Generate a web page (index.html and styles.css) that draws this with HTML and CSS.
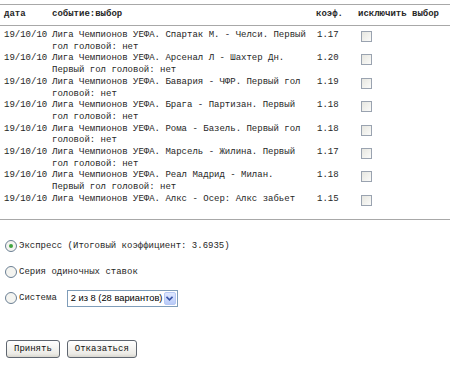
FILE: index.html
```html
<!DOCTYPE html>
<html lang="ru">
<head>
    <meta charset="UTF-8">
    <title>Экспресс</title>
    <link rel="stylesheet" href="styles.css">
</head>
<body>

    <table class="bets">
        <thead>
            <tr>
                <th class="col-date">дата</th>
                <th class="col-event">событие:выбор</th>
                <th class="col-coef">коэф.</th>
                <th class="col-check">исключить выбор</th>
            </tr>
        </thead>
        <tbody>
            <tr>
                <td class="col-date">19/10/10</td>
                <td class="col-event">Лига Чемпионов УЕФА. Спартак М. - Челси. Первый гол головой: нет</td>
                <td class="col-coef">1.17</td>
                <td class="col-check"><span class="box"></span></td>
            </tr>
            <tr>
                <td class="col-date">19/10/10</td>
                <td class="col-event">Лига Чемпионов УЕФА. Арсенал Л - Шахтер Дн. Первый гол головой: нет</td>
                <td class="col-coef">1.20</td>
                <td class="col-check"><span class="box"></span></td>
            </tr>
            <tr>
                <td class="col-date">19/10/10</td>
                <td class="col-event">Лига Чемпионов УЕФА. Бавария - ЧФР. Первый гол головой: нет</td>
                <td class="col-coef">1.19</td>
                <td class="col-check"><span class="box"></span></td>
            </tr>
            <tr>
                <td class="col-date">19/10/10</td>
                <td class="col-event">Лига Чемпионов УЕФА. Брага - Партизан. Первый гол головой: нет</td>
                <td class="col-coef">1.18</td>
                <td class="col-check"><span class="box"></span></td>
            </tr>
            <tr>
                <td class="col-date">19/10/10</td>
                <td class="col-event">Лига Чемпионов УЕФА. Рома - Базель. Первый гол головой: нет</td>
                <td class="col-coef">1.18</td>
                <td class="col-check"><span class="box"></span></td>
            </tr>
            <tr>
                <td class="col-date">19/10/10</td>
                <td class="col-event">Лига Чемпионов УЕФА. Марсель - Жилина. Первый гол головой: нет</td>
                <td class="col-coef">1.17</td>
                <td class="col-check"><span class="box"></span></td>
            </tr>
            <tr>
                <td class="col-date">19/10/10</td>
                <td class="col-event">Лига Чемпионов УЕФА. Реал Мадрид - Милан. Первый гол головой: нет</td>
                <td class="col-coef">1.18</td>
                <td class="col-check"><span class="box"></span></td>
            </tr>
            <tr class="last">
                <td class="col-date">19/10/10</td>
                <td class="col-event">Лига Чемпионов УЕФА. Алкс - Осер: Алкс забьет</td>
                <td class="col-coef">1.15</td>
                <td class="col-check"><span class="box"></span></td>
            </tr>
        </tbody>
    </table>

    <div class="bet-types">
        <label class="bet-type">
            <span class="radio checked"></span>Экспресс (Итоговый коэффициент: 3.6935)
        </label>
        <label class="bet-type">
            <span class="radio"></span>Серия одиночных ставок
        </label>
        <label class="bet-type">
            <span class="radio"></span>Система
            <span class="select">
                <span class="select-text">2 из 8 (28 вариантов)</span>
                <span class="select-arrow">
                    <svg width="7" height="5" viewBox="0 0 7 5"><path d="M0.5 0.8 L3.5 3.8 L6.5 0.8" fill="none" stroke="#3a55a8" stroke-width="1.6"/></svg>
                </span>
            </span>
        </label>
    </div>

    <div class="actions">
        <span class="btn">Принять</span>
        <span class="btn">Отказаться</span>
    </div>

</body>
</html>
```

FILE: styles.css
```css
body {
    margin: 0;
    padding: 4px 0 0 0;
    background: #ffffff;
    color: #262626;
    font-family: "Liberation Mono", "Courier New", monospace;
    font-size: 9px;
}

/* table of selected events */
.bets {
    width: 450px;
    border-collapse: collapse;
    table-layout: fixed;
    border-top: 1px solid #a8a8a8;
    border-bottom: 1px solid #a8a8a8;
}

.bets th,
.bets td {
    padding: 0;
    text-align: left;
    vertical-align: top;
    line-height: 11.7px;
}

.bets th {
    font-weight: bold;
    height: 20px;
    vertical-align: middle;
    border-bottom: 1px solid #a8a8a8;
}

.bets tbody tr:first-child td {
    padding-top: 4px;
}

.bets tr.last td {
    padding-bottom: 13px;
}

.col-date {
    width: 48px;
    padding-left: 4px !important;
}

.col-event {
    width: 256px;
    padding-right: 8px !important;
}

.col-coef {
    width: 42px;
}

.bets td.col-coef {
    padding-left: 1px !important;
}

.col-check {
    width: 92px;
}

.bets td.col-check {
    padding-left: 3px !important;
}

.box {
    display: inline-block;
    width: 9px;
    height: 9px;
    margin-top: 1px;
    border: 1px solid #9aa3b0;
    background: linear-gradient(135deg, #e6e6e0, #fbfbf9);
    vertical-align: top;
}

/* bet type choice */
.bet-types {
    display: flex;
    flex-direction: column;
    gap: 13px;
    padding: 20px 0 0 5px;
}

.bet-type {
    display: flex;
    align-items: center;
    height: 13px;
}

.radio {
    width: 10px;
    height: 10px;
    margin-right: 2px;
    border: 1px solid #6b7f94;
    border-radius: 50%;
    background: #f4f4f0;
    display: flex;
    align-items: center;
    justify-content: center;
}

.radio.checked::after {
    content: "";
    width: 4px;
    height: 4px;
    border-radius: 50%;
    background: #3fa33f;
}

.select {
    display: flex;
    align-items: center;
    margin-left: 10px;
    width: 109px;
    height: 15px;
    border: 1px solid #7f9db9;
    font-family: "Liberation Sans", Tahoma, sans-serif;
    font-size: 9.3px;
    color: #000000;
}

.select-text {
    flex: 1;
    padding-left: 3px;
    white-space: nowrap;
}

.select-arrow {
    width: 12px;
    height: 13px;
    margin-right: 1px;
    border: 1px solid #b6c8f5;
    border-radius: 2px;
    background: linear-gradient(#dfe8ff, #b9cbf8);
    display: flex;
    align-items: center;
    justify-content: center;
    box-sizing: border-box;
}

/* buttons */
.actions {
    display: flex;
    gap: 7px;
    padding: 35px 0 0 6px;
}

.btn {
    display: inline-block;
    height: 16px;
    line-height: 16px;
    padding: 0 7px;
    border: 1px solid #5f6670;
    border-radius: 3px;
    background: linear-gradient(#ffffff, #ecebe6 80%, #d8d6ce);
    color: #111111;
}
```
